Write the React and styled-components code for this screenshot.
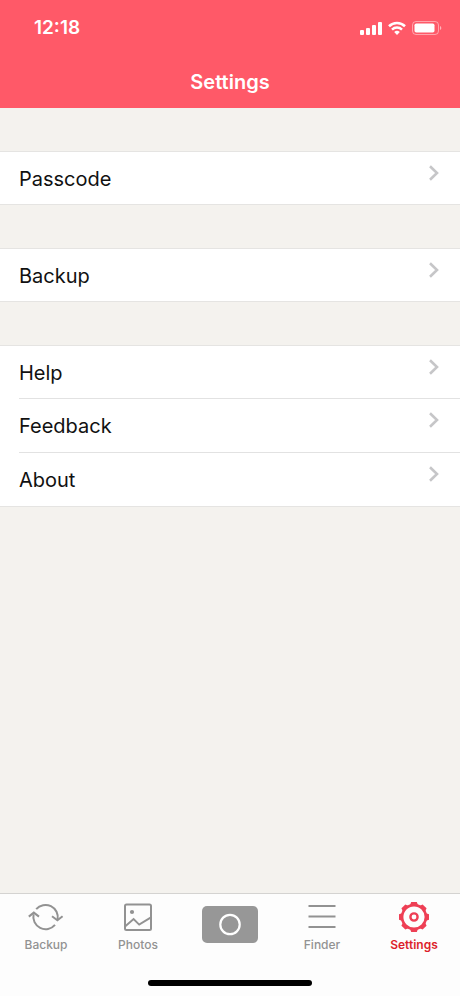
import React, { useState } from "react";
import styled, { createGlobalStyle } from "styled-components";

const GlobalStyle = createGlobalStyle`
  * {
    box-sizing: border-box;
  }

  body {
    margin: 0;
    background-color: #f4f2ee;
    font-family: Inter, "Liberation Sans", sans-serif;
  }
`;

const Screen = styled.div`
  display: flex;
  flex-direction: column;
  min-height: 100vh;
`;

const Header = styled.header`
  background-color: #ff5968;
  color: #fff;
`;

const StatusBar = styled.div`
  display: flex;
  align-items: center;
  justify-content: space-between;
  height: 56px;
  padding: 0 18px 0 34px;
`;

const Time = styled.time`
  font-size: 19px;
  font-weight: 600;
  line-height: 24px;
`;

const StatusIcons = styled.div`
  display: flex;
  align-items: center;
  gap: 6px;

  svg {
    display: block;
  }
`;

const Title = styled.h1`
  margin: 0;
  font-size: 20px;
  font-weight: 600;
  line-height: 52px;
  text-align: center;
`;

const Content = styled.main`
  flex: 1;
`;

const Group = styled.ul`
  margin: 43px 0 0;
  padding: 0;
  list-style: none;
  background-color: #fff;
  border: solid #e5e4e2;
  border-width: 1px 0;
`;

const Item = styled.li`
  padding-left: 19px;
`;

const RowButton = styled.button`
  display: flex;
  align-items: flex-start;
  justify-content: space-between;
  width: 100%;
  height: ${({ $divided }) => ($divided ? 54 : 52)}px;
  padding: 13px 20px 0 0;
  border: none;
  border-top: ${({ $divided }) => ($divided ? "1px solid #e2e2e2" : "none")};
  background: none;
  color: #111;
  font-family: inherit;
  font-size: 20px;
  line-height: 28px;
  text-align: left;
  cursor: pointer;
`;

const Chevron = styled.svg`
  display: block;
  fill: none;
  stroke: #c6c6c8;
  stroke-width: 2.6;
`;

const TabBar = styled.nav`
  display: grid;
  grid-template-columns: repeat(5, 1fr);
  height: 81px;
  padding-top: 7px;
  border-top: 1px solid #d4d3d1;
  background-color: #fdfdfd;
`;

const Tab = styled.button`
  display: flex;
  flex-direction: column;
  align-items: center;
  justify-content: flex-start;
  gap: 4px;
  padding: 0;
  border: none;
  background: none;
  color: ${({ $active }) => ($active ? "#dc1f2b" : "#929292")};
  font-family: inherit;
  font-size: 12px;
  font-weight: ${({ $active }) => ($active ? 600 : 500)};
  line-height: 16px;
  cursor: pointer;

  svg {
    display: block;
  }
`;

const HomeArea = styled.div`
  display: flex;
  justify-content: center;
  height: 22px;
  padding-top: 6px;
  background-color: #fdfdfd;
`;

const HomeBar = styled.div`
  width: 164px;
  height: 6px;
  border-radius: 3px;
  background-color: #000;
`;

const SignalIcon = () => (
  <svg width="22" height="14" viewBox="0 0 22 14" fill="#fff" aria-hidden="true">
    <rect x="0" y="9" width="4" height="5" rx="1" />
    <rect x="6" y="7" width="4" height="7" rx="1" />
    <rect x="12" y="4" width="4" height="10" rx="1" />
    <rect x="18" y="1" width="4" height="13" rx="1" />
  </svg>
);

const WifiIcon = () => (
  <svg width="18" height="14" viewBox="0 0 18 14" fill="none" stroke="#fff" aria-hidden="true">
    <path d="M1 5.2a11.5 11.5 0 0 1 16 0" strokeWidth="2.6" />
    <path d="M4 8.6a7.2 7.2 0 0 1 10 0" strokeWidth="2.5" />
    <path d="M9 14 6.2 11.1a4 4 0 0 1 5.6 0Z" fill="#fff" stroke="none" />
  </svg>
);

const BatteryIcon = () => (
  <svg width="30" height="14" viewBox="0 0 30 14" aria-hidden="true">
    <rect x=".5" y=".5" width="26" height="13" rx="3.5" fill="none" stroke="#fff" strokeOpacity=".45" />
    <rect x="2.5" y="2.5" width="20" height="9" rx="1.8" fill="#fff" />
    <path d="M28 5v4c1.8-.7 1.8-3.3 0-4Z" fill="#fff" fillOpacity=".55" />
  </svg>
);

const BackupIcon = () => (
  <svg width="36" height="32" viewBox="0 0 36 32" fill="none" stroke="currentColor" strokeWidth="2" aria-hidden="true">
    <path d="M8.2 8.2A12.3 12.3 0 0 1 29.6 18.6" />
    <path d="M24 15.2 29.4 19.2 34.6 15.2" />
    <path d="M27 23.8A12.3 12.3 0 0 1 5.6 13.2" />
    <path d="M.8 15.6 5.8 11.6 11 15.6" />
  </svg>
);

const PhotosIcon = () => (
  <svg width="36" height="32" viewBox="0 0 36 32" fill="none" stroke="currentColor" strokeWidth="2" aria-hidden="true">
    <rect x="5" y="3.5" width="26" height="25.5" rx="1.5" />
    <path d="M5 25.5 13.6 18 19.2 23.6 31 16.4" />
    <circle cx="12" cy="11" r="2.1" fill="currentColor" stroke="none" />
  </svg>
);

const CameraIcon = () => (
  <svg width="56" height="44" viewBox="0 0 56 44" aria-hidden="true">
    <rect y="5" width="56" height="37" rx="5" fill="#979797" />
    <circle cx="28" cy="23.5" r="9.7" fill="none" stroke="#fff" strokeWidth="2.2" />
  </svg>
);

const FinderIcon = () => (
  <svg width="36" height="32" viewBox="0 0 36 32" fill="none" stroke="currentColor" strokeWidth="2" aria-hidden="true">
    <path d="M4.5 5h27M4.5 15.5h27M4.5 26h27" />
  </svg>
);

const TEETH = [0, 45, 90, 135, 180, 225, 270, 315];

const SettingsIcon = () => (
  <svg width="36" height="32" viewBox="0 0 36 32" fill="none" stroke="#ee3f55" aria-hidden="true">
    <circle cx="18" cy="16" r="11.9" strokeWidth="2.6" />
    {TEETH.map((angle) => (
      <path
        key={angle}
        d="M13.9 4.6 15.2 1h5.6l1.3 3.6Z"
        fill="#ee3f55"
        stroke="none"
        transform={`rotate(${angle} 18 16)`}
      />
    ))}
    <circle cx="18" cy="16" r="3.6" strokeWidth="2.4" />
  </svg>
);

const groups = [["Passcode"], ["Backup"], ["Help", "Feedback", "About"]];

const tabs = [
  { name: "Backup", Icon: BackupIcon },
  { name: "Photos", Icon: PhotosIcon },
  { name: "Camera", Icon: CameraIcon, iconOnly: true },
  { name: "Finder", Icon: FinderIcon },
  { name: "Settings", Icon: SettingsIcon },
];

const SettingsGroup = ({ items }) => (
  <Group>
    {items.map((item, index) => (
      <Item key={item}>
        <RowButton type="button" $divided={index > 0}>
          {item}
          <Chevron width="12" height="16" viewBox="0 0 12 16" aria-hidden="true">
            <path d="M2 1.2 9 8 2 14.8" />
          </Chevron>
        </RowButton>
      </Item>
    ))}
  </Group>
);

const App = () => {
  const [activeTab, setActiveTab] = useState("Settings");

  return (
    <Screen>
      <GlobalStyle />
      <Header>
        <StatusBar>
          <Time>12:18</Time>
          <StatusIcons>
            <SignalIcon />
            <WifiIcon />
            <BatteryIcon />
          </StatusIcons>
        </StatusBar>
        <Title>Settings</Title>
      </Header>
      <Content>
        {groups.map((items) => (
          <SettingsGroup key={items[0]} items={items} />
        ))}
      </Content>
      <TabBar>
        {tabs.map(({ name, Icon, iconOnly }) => (
          <Tab
            key={name}
            type="button"
            aria-label={iconOnly ? name : undefined}
            $active={activeTab === name}
            onClick={() => setActiveTab(name)}
          >
            <Icon />
            {!iconOnly && name}
          </Tab>
        ))}
      </TabBar>
      <HomeArea>
        <HomeBar />
      </HomeArea>
    </Screen>
  );
};

export default App;
